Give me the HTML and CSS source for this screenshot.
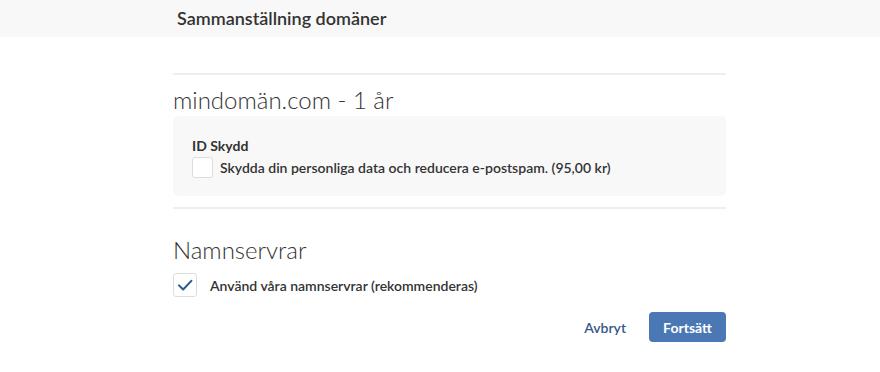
FILE: index.html
```html
<!DOCTYPE html>
<html lang="sv">
<head>
<meta charset="utf-8">
<title>Sammanställning domäner</title>
<link rel="stylesheet" href="styles.css">
</head>
<body>
<header class="topbar">
  <div class="container">
    <h1 class="title">Sammanställning domäner</h1>
  </div>
</header>
<main class="container content">
  <hr class="divider first">
  <h2 class="section-title">mindomän.com - 1 år</h2>
  <div class="addon-box">
    <div class="addon-label">ID Skydd</div>
    <label class="check-row">
      <span class="checkbox"></span>
      <span class="check-text">Skydda din personliga data och reducera e-postspam. (95,00 kr)</span>
    </label>
  </div>
  <hr class="divider">
  <h2 class="section-title ns">Namnservrar</h2>
  <label class="check-row ns-row">
    <span class="checkbox big checked">
      <svg viewBox="0 0 24 24" width="18" height="18"><path d="M4 12.5 L9.5 18 L20.5 6.5" fill="none" stroke="#2f5b8f" stroke-width="2.8" stroke-linecap="round" stroke-linejoin="round"/></svg>
    </span>
    <span class="check-text">Använd våra namnservrar (rekommenderas)</span>
  </label>
  <div class="actions">
    <a class="link-btn">Avbryt</a>
    <button class="primary-btn">Fortsätt</button>
  </div>
</main>
</body>
</html>
```
FILE: styles.css
```css
* { box-sizing: border-box; }
body {
  margin: 0;
  font-family: "Lato", "Open Sans", sans-serif;
  color: #333;
  background: #fff;
}
.container {
  width: 553px;
  margin-left: 173px;
}
.topbar {
  background: #f8f8f8;
  height: 37px;
}
.title {
  margin: 0;
  padding-left: 4px;
  font-size: 18px;
  font-weight: 600;
  line-height: 37px;
  color: #333;
}
.content { padding-top: 36px; }
.divider {
  border: 0;
  border-top: 2px solid #eee;
  margin: 0;
}
.section-title {
  margin: 10px 0 0;
  font-size: 24px;
  font-weight: 300;
  line-height: 30px;
  color: #333;
}
.addon-box {
  margin-top: 1px;
  margin-bottom: 11px;
  background: #f8f8f8;
  border-radius: 5px;
  padding: 21px 19px 18px;
  height: 80px;
}
.addon-label {
  font-size: 14px;
  font-weight: 700;
  line-height: 18px;
  margin-bottom: 2px;
}
.check-row {
  display: flex;
  align-items: center;
  gap: 7px;
  font-size: 14px;
  font-weight: 600;
}
.checkbox {
  width: 21px;
  height: 21px;
  border: 1px solid #ddd;
  border-radius: 3px;
  background: #fff;
  display: flex;
  align-items: center;
  justify-content: center;
  flex: none;
}
.checkbox.big { width: 24px; height: 24px; }
.ns { margin-top: 26px; }
.ns-row { margin-top: 8px; gap: 13px; }
.actions {
  display: flex;
  justify-content: flex-end;
  align-items: center;
  gap: 23px;
  margin-top: 15px;
}
.link-btn {
  color: #36598a;
  font-size: 14px;
  font-weight: 600;
}
.primary-btn {
  font-family: inherit;
  background: #4a78b4;
  color: #fff;
  border: 0;
  border-radius: 4px;
  font-size: 14px;
  font-weight: 700;
  width: 77px;
  height: 30px;
}
```
